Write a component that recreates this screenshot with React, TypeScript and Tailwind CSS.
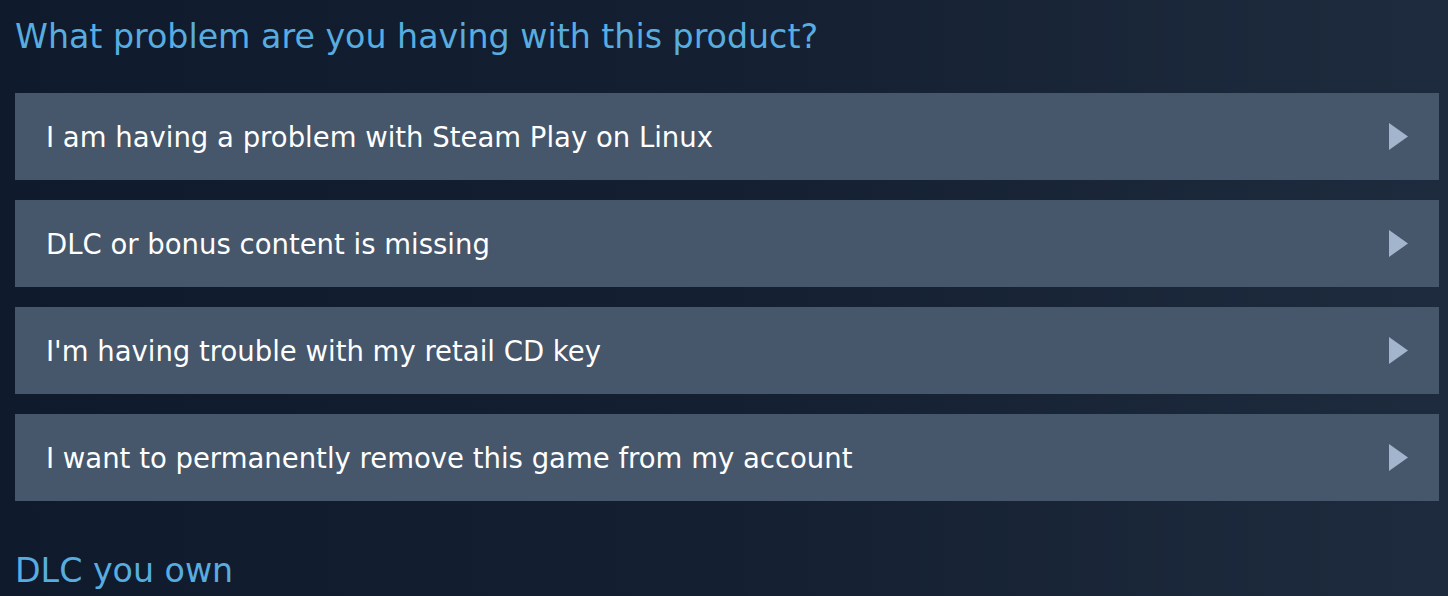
const OPTIONS = [
  "I am having a problem with Steam Play on Linux",
  "DLC or bonus content is missing",
  "I'm having trouble with my retail CD key",
  "I want to permanently remove this game from my account",
];

function Arrow() {
  return (
    <svg width="19" height="27" viewBox="0 0 19 27" className="shrink-0">
      <path d="M0 0 L19 13.5 L0 27 Z" fill="#a3b5cd" />
    </svg>
  );
}

export default function App() {
  return (
    <div className="h-[596px] w-[1448px] overflow-hidden bg-gradient-to-r from-[#0f1a2d] via-[#142031] to-[#1e2b3e] pl-[15px] pr-[9px] font-['DejaVu_Sans',sans-serif]">
      <h2 className="pt-[15px] text-[33.25px] leading-[44px] text-[#58ade0]">
        What problem are you having with this product?
      </h2>

      <div className="mt-[34px] flex flex-col gap-[20px]">
        {OPTIONS.map((opt) => (
          <button
            key={opt}
            type="button"
            className="flex h-[87px] w-full items-center justify-between bg-[#46566b] px-[31px] text-left"
          >
            <span className="pt-[3px] text-[27.5px] text-white">{opt}</span>
            <Arrow />
          </button>
        ))}
      </div>

      <h2 className="mt-[48px] text-[33.25px] leading-[44px] text-[#58ade0]">
        DLC you own
      </h2>
    </div>
  );
}
